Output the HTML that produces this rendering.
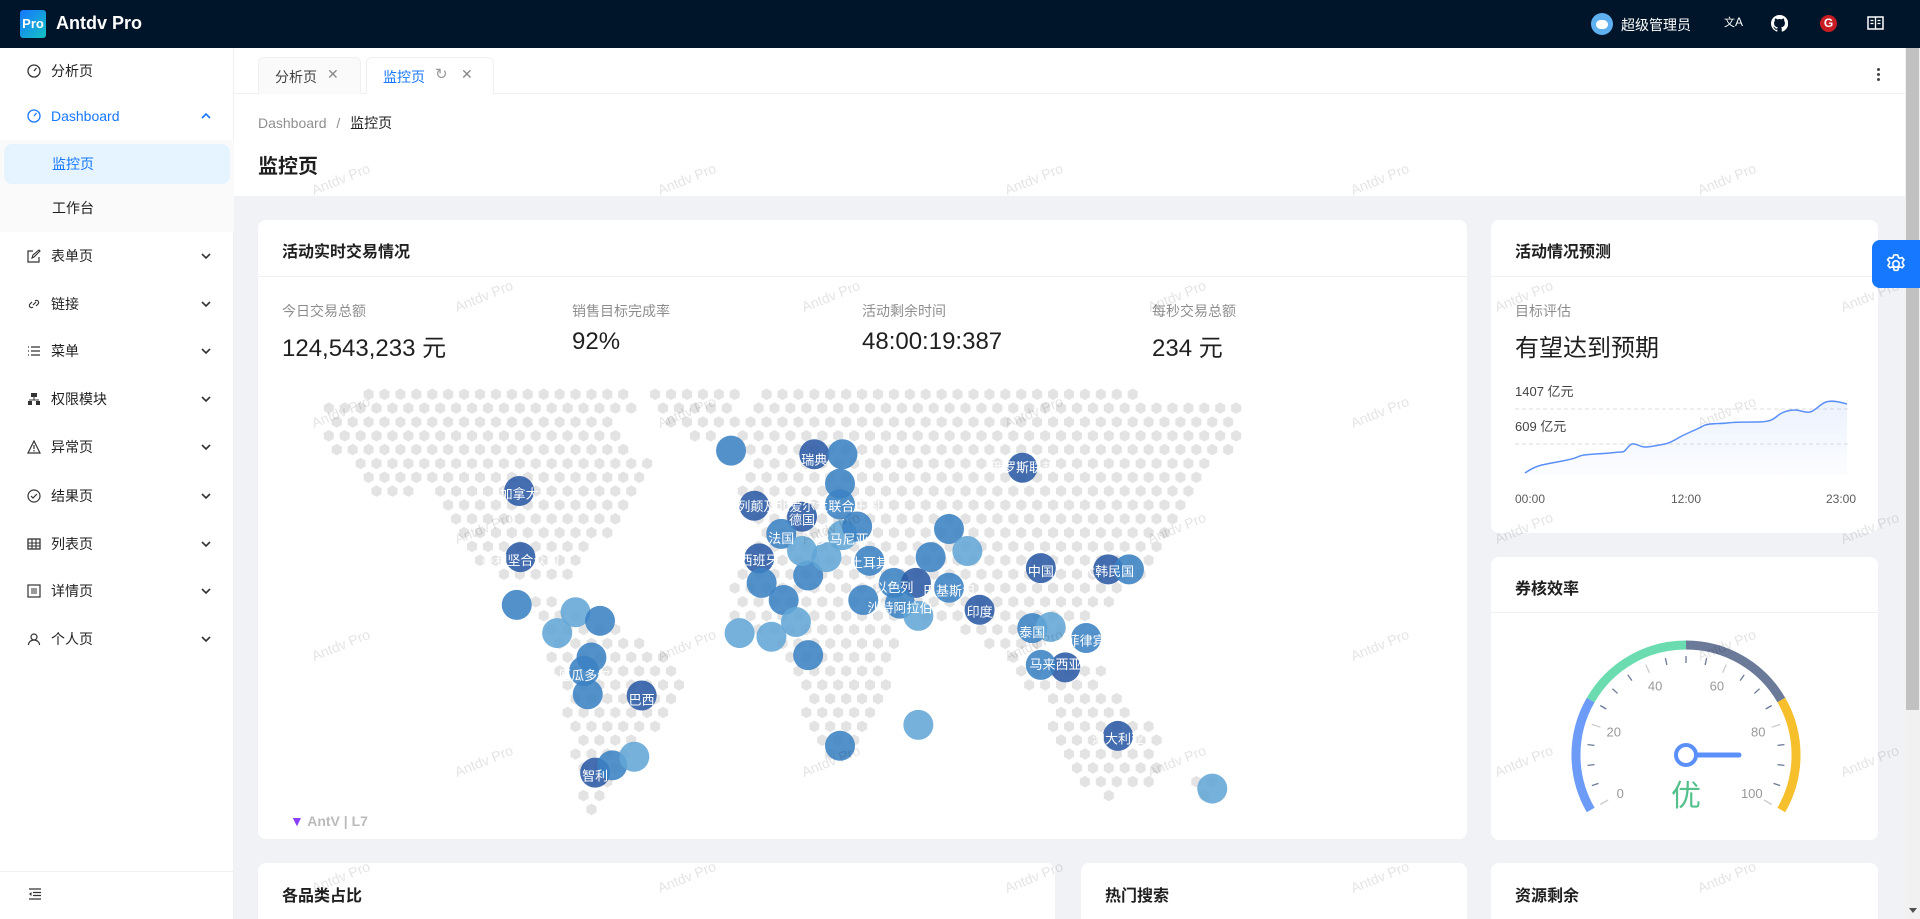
<!DOCTYPE html>
<html style="width:1920px;height:919px;overflow:hidden"><head><meta charset="utf-8">
<style>
*{box-sizing:border-box;margin:0;padding:0}
body{width:1920px;height:919px;overflow:hidden;position:relative;background:#f0f2f5;font-family:"Liberation Sans","Noto Sans CJK SC",sans-serif;font-size:14px;color:rgba(0,0,0,.88)}
.a{position:absolute}
.hdr{left:0;top:0;width:1920px;height:48px;background:#001529}
.side{left:0;top:48px;width:234px;height:871px;background:#fff;border-right:1px solid #f0f0f0}
.mi{position:absolute;left:0;width:234px;height:40px;line-height:40px}
.mi .t{position:absolute;left:51px}
.mi .ic{position:absolute;left:27px;top:13px;width:14px;height:14px}
.card{position:absolute;background:#fff;border-radius:8px}
.ct{position:absolute;left:24px;font-size:16px;font-weight:bold;color:rgba(0,0,0,.88)}
.dv{position:absolute;left:0;right:0;height:1px;background:#f0f0f0}
.lbl{position:absolute;color:rgba(0,0,0,.45);font-size:14px}
.val{position:absolute;font-size:24px;color:rgba(0,0,0,.88)}
.wm{position:absolute;color:rgba(0,0,0,.11);font-size:14px;transform:rotate(-22deg);white-space:nowrap;pointer-events:none;z-index:50}
</style></head><body>
<div class="a hdr">
 <div class="a" style="left:20px;top:10px;width:26px;height:28px;border-radius:3px;background:linear-gradient(135deg,#1677ff,#13c2c2);color:#fff;font-size:13px;font-weight:bold;line-height:28px;text-align:center">Pro</div>
 <div class="a" style="left:56px;top:13px;color:#fff;font-size:18px;font-weight:bold">Antdv Pro</div>
 <div class="a" style="left:1591px;top:13px;width:22px;height:22px;border-radius:50%;background:#5fb0f0"><div class="a" style="left:5px;top:7px;width:12px;height:9px;border-radius:5px;background:#fff"></div></div>
 <div class="a" style="left:1621px;top:15px;color:#fff;font-size:14px">超级管理员</div>
 <div class="a" style="left:1724px;top:14px;color:#fff;font-size:11px">文<span style="font-size:12px">A</span></div>
 <svg class="a" style="left:1771px;top:15px" width="17" height="17" viewBox="0 0 16 16"><path fill="#fff" d="M8 0a8 8 0 0 0-2.5 15.6c.4 0 .5-.2.5-.4v-1.4c-2.2.5-2.7-1-2.7-1-.4-.9-.9-1.2-.9-1.2-.7-.5.1-.5.1-.5.8.1 1.2.8 1.2.8.7 1.3 1.9.9 2.300.7.1-.5.3-.9.5-1.1-1.8-.2-3.6-.9-3.6-4 0-.9.3-1.6.8-2.1-.1-.2-.4-1 .1-2.1 0 0 .7-.2 2.2.8a7.4 7.4 0 0 1 4 0c1.5-1 2.2-.8 2.2-.8.4 1.1.2 1.9.1 2.1.5.6.8 1.3.8 2.1 0 3.1-1.9 3.8-3.6 4 .3.3.6.7.6 1.5v2.2c0 .2.1.5.6.4A8 8 0 0 0 8 0z"/></svg>
 <div class="a" style="left:1820px;top:15px;width:17px;height:17px;border-radius:50%;background:#c71d23;color:#fff;font-size:12px;font-weight:bold;text-align:center;line-height:17px">G</div>
 <svg class="a" style="left:1867px;top:16px" width="17" height="15" viewBox="0 0 17 15"><rect x="1" y="1" width="15" height="12" fill="none" stroke="#fff" stroke-width="1.5"/><path d="M8.5 1v12M3.5 4.5h3M3.5 7.5h3M10.5 4.5h3M10.5 7.5h3" stroke="#fff" stroke-width="1.3"/></svg>
</div>

<div class="a side">
 <div class="mi" style="top:3px"><svg class="ic" viewBox="0 0 14 14"><circle cx="7" cy="7" r="6" fill="none" stroke="#333" stroke-width="1.3"/><path d="M7 7l2.5-3" stroke="#333" stroke-width="1.3"/></svg><span class="t">分析页</span></div>
 <div class="mi" style="top:48px;color:#1677ff"><svg class="ic" viewBox="0 0 14 14"><circle cx="7" cy="7" r="6" fill="none" stroke="#1677ff" stroke-width="1.3"/><path d="M7 7l2.5-3" stroke="#1677ff" stroke-width="1.3"/></svg><span class="t">Dashboard</span><svg width="10" height="8" viewBox="0 0 10 8" style="position:absolute;left:201px;top:16px"><path d="M1 6l4-4 4 4" fill="none" stroke="#1677ff" stroke-width="1.6"/></svg></div>
 <div class="a" style="left:0;top:92px;width:234px;height:92px;background:#fafafa"></div>
 <div class="a" style="left:4px;top:96px;width:226px;height:40px;border-radius:8px;background:#e6f4ff"></div>
 <div class="mi" style="top:96px;color:#1677ff"><span class="t" style="left:52px">监控页</span></div>
 <div class="mi" style="top:140px"><span class="t" style="left:52px">工作台</span></div>
 <div class="mi" style="top:188px"><svg class="ic" viewBox="0 0 14 14"><path d="M12 8v5H1V2h5" fill="none" stroke="#333" stroke-width="1.2"/><path d="M5 9l1-3 6-5 1 1-6 6z" fill="none" stroke="#333" stroke-width="1.1"/></svg><span class="t">表单页</span></div>
 <div class="mi" style="top:236px"><svg class="ic" viewBox="0 0 14 14"><path d="M6 8l3-3M5 5l-2 2a2 2 0 0 0 3 3M9 9l2-2a2 2 0 0 0-3-3" fill="none" stroke="#333" stroke-width="1.2"/></svg><span class="t">链接</span></div>
 <div class="mi" style="top:283px"><svg class="ic" viewBox="0 0 14 14"><path d="M1 3h1M1 7h1M1 11h1M4 3h9M4 7h9M4 11h9" stroke="#333" stroke-width="1.2"/></svg><span class="t">菜单</span></div>
 <div class="mi" style="top:331px"><svg class="ic" viewBox="0 0 14 14"><rect x="4" y="1" width="6" height="4" fill="#333"/><path d="M7 5v3M2 8h10" stroke="#333"/><rect x="1" y="9" width="4" height="4" fill="#333"/><rect x="9" y="9" width="4" height="4" fill="#333"/></svg><span class="t">权限模块</span></div>
 <div class="mi" style="top:379px"><svg class="ic" viewBox="0 0 14 14"><path d="M7 1l6 12H1z" fill="none" stroke="#333" stroke-width="1.2"/><path d="M7 5v4M7 10v1.5" stroke="#333" stroke-width="1.2"/></svg><span class="t">异常页</span></div>
 <div class="mi" style="top:428px"><svg class="ic" viewBox="0 0 14 14"><circle cx="7" cy="7" r="6" fill="none" stroke="#333" stroke-width="1.2"/><path d="M4 7l2 2 4-4" fill="none" stroke="#333" stroke-width="1.2"/></svg><span class="t">结果页</span></div>
 <div class="mi" style="top:476px"><svg class="ic" viewBox="0 0 14 14"><rect x="1" y="2" width="12" height="10" fill="none" stroke="#333" stroke-width="1.3"/><path d="M1 6h12M1 9h12M5 2v10M9 2v10" stroke="#333" stroke-width="1.1"/></svg><span class="t">列表页</span></div>
 <div class="mi" style="top:523px"><svg class="ic" viewBox="0 0 14 14"><rect x="1" y="1" width="12" height="12" fill="none" stroke="#333" stroke-width="1.2"/><path d="M4 5h6M4 7h6M4 9h6" stroke="#333"/></svg><span class="t">详情页</span></div>
 <div class="mi" style="top:571px"><svg class="ic" viewBox="0 0 14 14"><circle cx="7" cy="5" r="3" fill="none" stroke="#333" stroke-width="1.2"/><path d="M1.5 13a5.5 5 0 0 1 11 0" fill="none" stroke="#333" stroke-width="1.2"/></svg><span class="t">个人页</span></div>
 <div class="a" style="left:0;top:823px;width:234px;height:1px;background:#f0f0f0"></div>
 <svg class="a" style="left:28px;top:840px" width="14" height="12" viewBox="0 0 14 12"><path d="M1 1h12M5 4.5h8M5 7.5h8M1 11h12" stroke="#333" stroke-width="1.2"/><path d="M3.5 4L1 6l2.5 2z" fill="#333"/></svg>
</div>
<script>
(function(){var s=document.currentScript.previousElementSibling;var ys=[188,236,283,331,379,428,476,523,571];ys.forEach(function(y){var c=document.createElementNS('http://www.w3.org/2000/svg','svg');c.setAttribute('width','10');c.setAttribute('height','8');c.setAttribute('viewBox','0 0 10 8');c.setAttribute('style','position:absolute;left:201px;top:'+(y+16)+'px');c.innerHTML='<path d="M1 2l4 4 4-4" fill="none" stroke="#333" stroke-width="1.6"/>';s.appendChild(c);});})();
</script>

<div class="a" style="left:234px;top:48px;width:1671px;height:148px;background:#fff"></div>
<div class="a" style="left:234px;top:93px;width:1671px;height:1px;background:#f0f0f0"></div>
<div class="a" style="left:258px;top:57px;width:103px;height:37px;background:#fafafa;border:1px solid #f0f0f0;border-bottom:none;border-radius:6px 6px 0 0"><span class="a" style="left:16px;top:9px;color:rgba(0,0,0,.75)">分析页</span><span class="a" style="left:68px;top:8px;color:#888;font-size:14px">✕</span></div>
<div class="a" style="left:366px;top:57px;width:128px;height:37px;background:#fff;border:1px solid #f0f0f0;border-bottom:none;border-radius:6px 6px 0 0"><span class="a" style="left:16px;top:9px;color:#1677ff">监控页</span><span class="a" style="left:68px;top:7px;color:#999;font-size:15px">↻</span><span class="a" style="left:94px;top:8px;color:#888">✕</span></div>
<div class="a" style="left:1877px;top:68px;width:3px;height:3px;background:#444;border-radius:50%;box-shadow:0 5px 0 #444,0 10px 0 #444"></div>
<div class="a" style="left:258px;top:113px;color:rgba(0,0,0,.45)">Dashboard <span style="margin:0 6px">/</span> <span style="color:rgba(0,0,0,.88)">监控页</span></div>
<div class="a" style="left:258px;top:150px;font-size:20px;font-weight:bold">监控页</div>

<div class="a" style="left:1905px;top:48px;width:15px;height:871px;background:#f1f1f1"></div>
<div class="a" style="left:1906px;top:48px;width:13px;height:662px;background:#c1c1c1"></div>
<div class="a" style="left:1909px;top:908px;width:0;height:0;border-left:4px solid transparent;border-right:4px solid transparent;border-top:5px solid #505050"></div>

<div class="card" style="left:258px;top:220px;width:1209px;height:619px">
 <div class="ct" style="top:18px">活动实时交易情况</div>
 <div class="dv" style="top:56px"></div>
 <div class="lbl" style="left:24px;top:81px">今日交易总额</div><div class="val" style="left:24px;top:108px">124,543,233 元</div>
 <div class="lbl" style="left:314px;top:81px">销售目标完成率</div><div class="val" style="left:314px;top:108px">92%</div>
 <div class="lbl" style="left:604px;top:81px">活动剩余时间</div><div class="val" style="left:604px;top:108px">48:00:19:387</div>
 <div class="lbl" style="left:894px;top:81px">每秒交易总额</div><div class="val" style="left:894px;top:108px">234 元</div>
 <div class="a" style="left:32px;top:593px;font-size:14px;color:#bbb;font-weight:bold"><span style="color:#8a3ffc">▼</span> AntV | L7</div>
</div>
<svg id="map" class="a" style="left:0;top:0;z-index:5" width="1920" height="919"></svg>

<div class="card" style="left:1491px;top:220px;width:387px;height:313px">
 <div class="ct" style="top:18px">活动情况预测</div>
 <div class="dv" style="top:56px"></div>
 <div class="lbl" style="left:24px;top:81px">目标评估</div>
 <div class="val" style="left:24px;top:108px">有望达到预期</div>
 <div class="a" style="left:24px;top:161px;font-size:13px;color:rgba(0,0,0,.75)">1407 亿元</div>
 <div class="a" style="left:24px;top:196px;font-size:13px;color:rgba(0,0,0,.75)">609 亿元</div>
 <div class="a" style="left:24px;top:272px;font-size:12px;color:rgba(0,0,0,.65)">00:00</div>
 <div class="a" style="left:180px;top:272px;font-size:12px;color:rgba(0,0,0,.65)">12:00</div>
 <div class="a" style="left:335px;top:272px;font-size:12px;color:rgba(0,0,0,.65)">23:00</div>
</div>
<svg class="a" style="left:0;top:0" width="1920" height="919">
 <defs><linearGradient id="g" x1="0" y1="0" x2="0" y2="1"><stop offset="0" stop-color="#5b8ff9" stop-opacity=".12"/><stop offset="1" stop-color="#5b8ff9" stop-opacity=".02"/></linearGradient></defs>
 <path d="M1515 409H1848M1515 444H1848" stroke="#ddd" stroke-dasharray="4 3"/>
 <path d="M1525 473 C1535 466 1540 465 1557 462 S1575 458 1580 456 S1600 454 1610 453 S1618 452 1622 452 S1628 445 1632 444 S1640 447 1645 447 S1660 445 1665 444 S1675 440 1680 437 S1698 429 1703 426 S1720 424 1727 423 S1740 422 1757 422 S1775 417 1780 414 S1790 410 1795 410 S1805 413 1810 412 S1820 404 1826 402 S1840 402 1847 404" fill="none" stroke="#5b8ff9" stroke-width="1.5"/>
 <path d="M1525 473 C1535 466 1540 465 1557 462 S1575 458 1580 456 S1600 454 1610 453 S1618 452 1622 452 S1628 445 1632 444 S1640 447 1645 447 S1660 445 1665 444 S1675 440 1680 437 S1698 429 1703 426 S1720 424 1727 423 S1740 422 1757 422 S1775 417 1780 414 S1790 410 1795 410 S1805 413 1810 412 S1820 404 1826 402 S1840 402 1847 404 V475 H1525Z" fill="url(#g)"/>
</svg>

<div class="card" style="left:1491px;top:557px;width:387px;height:283px">
 <div class="ct" style="top:18px">券核效率</div>
 <div class="dv" style="top:55px"></div>
</div>
<svg id="gauge" class="a" style="left:0;top:0" width="1920" height="919">
 <g fill="none" stroke-width="9">
  <path d="M1590.7 810 A110 110 0 0 1 1590.7 700" stroke="#6c9bf8"/>
  <path d="M1590.7 700 A110 110 0 0 1 1686 645" stroke="#6bdcb0"/>
  <path d="M1686 645 A110 110 0 0 1 1781.3 700" stroke="#6b7a99"/>
  <path d="M1781.3 700 A110 110 0 0 1 1781.3 810" stroke="#f6c02d"/>
 </g>
 <circle cx="1686" cy="755" r="10" fill="#fff" stroke="#5b8ff9" stroke-width="4"/>
 <path d="M1697 755H1739" stroke="#5b8ff9" stroke-width="5" stroke-linecap="round"/>
 <text x="1686" y="806" text-anchor="middle" font-size="30" fill="#55c08b" font-family="Liberation Sans,Noto Sans CJK SC,sans-serif">优</text>
</svg>

<div class="card" style="left:258px;top:863px;width:797px;height:56px;border-radius:8px 8px 0 0"><div class="ct" style="top:19px">各品类占比</div></div>
<div class="card" style="left:1081px;top:863px;width:386px;height:56px;border-radius:8px 8px 0 0"><div class="ct" style="top:19px">热门搜索</div></div>
<div class="card" style="left:1491px;top:863px;width:387px;height:56px;border-radius:8px 8px 0 0"><div class="ct" style="top:19px">资源剩余</div></div>

<div class="a" style="left:1872px;top:240px;width:48px;height:48px;background:#1677ff;border-radius:8px 0 0 8px;z-index:60">
 <svg class="a" style="left:13px;top:13px" width="22" height="22" viewBox="0 0 24 24"><path d="M12 2l2 .3.6 2.6 1.6.9 2.5-.9 2 2.5-1.6 2.1v2l1.6 2.1-2 2.5-2.5-.9-1.6.9-.6 2.6-2 .3-2-.3-.6-2.6-1.6-.9-2.5.9-2-2.5 1.6-2.1v-2L2.8 7.4l2-2.5 2.5.9 1.6-.9L9.5 2.3z" fill="none" stroke="#fff" stroke-width="1.8" stroke-linejoin="round"/><circle cx="12" cy="12" r="3.5" fill="none" stroke="#fff" stroke-width="1.8"/></svg>
</div>
<div id="wms"></div>
<script>
var S=1.2245;
var g=document.getElementById('gauge'),cx=1686,cy=755,h='';
for(var v=0;v<=100;v+=5){var a=(210-2.4*v)*Math.PI/180,c=Math.cos(a),s=Math.sin(a);var major=v%20==0;var r1=major?90:92,r2=99;
h+='<line x1="'+(cx+r1*c)+'" y1="'+(cy-r1*s)+'" x2="'+(cx+r2*c)+'" y2="'+(cy-r2*s)+'" stroke="'+(major?'#ccc':'#6b7a99')+'" stroke-width="1.3"/>';
if(major){h+='<text x="'+(cx+76*c)+'" y="'+(cy-76*s+5)+'" text-anchor="middle" font-size="13" fill="#999" font-family="Liberation Sans,sans-serif">'+v+'</text>';}}
g.insertAdjacentHTML('beforeend',h);
var polys=[
[[265,325],[320,318],[450,320],[515,318],[520,330],[500,345],[530,380],[520,400],[500,430],[470,470],[450,470],[420,480],[400,470],[380,440],[370,420],[350,400],[300,410],[290,380],[265,360]],
[[520,318],[605,318],[600,345],[575,360],[545,350]],
[[420,480],[470,495],[480,520],[460,525],[440,505]],
[[450,510],[500,505],[540,530],[560,560],[540,590],[510,620],[495,660],[480,672],[468,620],[458,560],[448,530]],
[[620,318],[700,318],[900,318],[1012,330],[1015,360],[990,380],[960,420],[940,460],[925,480],[900,500],[870,520],[830,540],[800,530],[780,510],[740,500],[720,500],[700,490],[650,480],[610,480],[600,460],[620,430],[600,410],[610,380],[600,350]],
[[600,470],[660,470],[700,490],[740,500],[730,540],[720,570],[710,600],[690,622],[670,622],[660,590],[650,540],[620,520],[600,510],[595,490]],
[[860,570],[920,570],[945,600],[945,640],[900,652],[870,630],[860,600]],
[[820,540],[900,545],[905,562],[840,560]],
[[970,630],[995,630],[995,655],[972,655]]
];
function inP(x,y,p){var c=false;for(var i=0,j=p.length-1;i<p.length;j=i++){var xi=p[i][0],yi=p[i][1],xj=p[j][0],yj=p[j][1];if(((yi>y)!=(yj>y))&&(x<(xj-xi)*(y-yi)/(yj-yi)+xi))c=!c;}return c;}
var m=document.getElementById('map'),out='';
var row=0;for(var y=322;y<680;y+=11.3,row++){for(var x=262+(row%2?6.5:0);x<1020;x+=13){var ok=false;for(var k=0;k<polys.length;k++)if(inP(x,y,polys[k])){ok=true;break}
if(ok){var X=x*S,Y=y*S,r=5.8,pts='';for(var q=0;q<6;q++){var an=(60*q+30)*Math.PI/180;pts+=(X+r*Math.cos(an)).toFixed(1)+','+(Y+r*Math.sin(an)).toFixed(1)+' ';}out+='<polygon points="'+pts+'" fill="#e3e3e3"/>';}}}
var D='#2a5aa5',M='#3b82c4',L='#62a6d6';
var b=[[597,368,M],[665,371,D],[688,371,M],[424,401,D],[686,395,M],[616,413,D],[655,422,D],[686,412,M],[638,436,M],[688,437,L],[700,430,M],[620,456,D],[710,458,M],[425,455,D],[775,432,M],[790,450,L],[760,455,M],[850,464,D],[905,465,D],[922,465,M],[730,476,M],[748,476,D],[775,480,M],[800,498,D],[735,493,M],[750,503,L],[705,490,M],[640,490,M],[622,476,M],[660,470,M],[655,450,L],[675,455,L],[843,513,M],[858,512,L],[887,521,M],[870,545,D],[850,543,M],[422,494,M],[470,500,L],[490,507,M],[455,517,L],[483,537,M],[477,548,M],[480,567,M],[524,568,D],[604,517,L],[630,520,L],[660,535,M],[650,508,L],[750,592,L],[686,609,M],[913,601,D],[990,644,L],[486,631,D],[500,625,M],[518,618,L],[835,382,D]];
b.forEach(function(c){out+='<circle cx="'+c[0]*S+'" cy="'+c[1]*S+'" r="15" fill="'+c[2]+'" fill-opacity=".88"/>';});
var lb=[[665,376,'瑞典'],[424,404,'加拿大'],[650,414,'大不列颠及北爱尔兰联合王国'],[655,425,'德国'],[638,440,'法国'],[688,441,'罗马尼亚'],[620,458,'西班牙'],[710,460,'土耳其'],[425,458,'美利坚合众国'],[835,382,'俄罗斯联邦'],[850,467,'中国'],[905,467,'大韩民国'],[730,480,'以色列'],[775,483,'巴基斯坦'],[800,500,'印度'],[735,497,'沙特阿拉伯'],[843,517,'泰国'],[887,524,'菲律宾'],[862,543,'马来西亚'],[477,552,'厄瓜多尔'],[524,572,'巴西'],[913,604,'澳大利亚'],[486,634,'智利']];
lb.forEach(function(l){out+='<text x="'+l[0]*S+'" y="'+(l[1]*S+4)+'" text-anchor="middle" font-size="13" fill="#fff" font-family="Liberation Sans,Noto Sans CJK SC,sans-serif">'+l[2]+'</text>';});
m.innerHTML=out;
var w='';for(var r=0;r<8;r++){for(var j=0;j<6;j++){var x=(283+283*j+(r%2?117:0)-30)*S,y=(150+95*r-10)*S;if(x>1860||y>890)continue;w+='<div class="wm" style="left:'+x+'px;top:'+y+'px">Antdv Pro</div>';}}
document.getElementById('wms').innerHTML=w;
</script>
</body></html>
